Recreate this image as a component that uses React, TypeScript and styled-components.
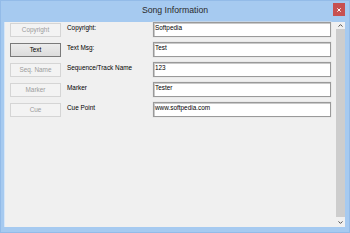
import React from "react";
import styled, { createGlobalStyle } from "styled-components";

const GlobalStyle = createGlobalStyle`
  html, body { margin: 0; padding: 0; background: #ffffff; }
  body { font-family: "Liberation Sans", Arial, sans-serif; }
  * { box-sizing: border-box; }
`;

const Window = styled.div`
  width: 350px;
  height: 233px;
  background: #a6caf0;
  box-shadow: inset 0 0 0 1px #93bbe8;
  display: flex;
  flex-direction: column;
  padding: 0 5px 6px 5px;
`;

const TitleBar = styled.div`
  height: 22px;
  display: grid;
  grid-template-columns: 1fr auto 1fr;
  align-items: start;
`;

const Title = styled.div`
  grid-column: 2;
  font-size: 8.7px;
  line-height: 10px;
  margin-top: 5px;
  color: #2b2b2b;
  white-space: nowrap;
`;

const CloseButton = styled.div`
  grid-column: 3;
  justify-self: end;
  margin-top: 3px;
  width: 12px;
  height: 13px;
  background: #c75050;
  display: flex;
  align-items: center;
  justify-content: center;
`;

const Client = styled.div`
  flex: 1;
  display: flex;
  background: #f0f0f0;
  box-shadow: -1px 0 0 #d6e6f8;
`;

const Content = styled.div`
  flex: 1;
  padding-left: 5px;
  display: flex;
  flex-direction: column;
`;

const Row = styled.div`
  height: 20px;
  display: grid;
  grid-template-columns: 57px 86px 178px;
  align-items: start;
`;

const SideButton = styled.div<{ $enabled?: boolean }>`
  margin-top: 1px;
  width: 51px;
  height: 14px;
  border: 1px solid ${(p) => (p.$enabled ? "#7a7a7a" : "#d5d5d5")};
  background: ${(p) => (p.$enabled ? "linear-gradient(#ececec, #dcdcdc)" : "#f3f3f3")};
  color: ${(p) => (p.$enabled ? "#000000" : "#9c9c9c")};
  font-size: 6.4px;
  line-height: 12px;
  text-align: center;
  white-space: nowrap;
`;

const Label = styled.div`
  padding-top: 2px;
  font-size: 6.4px;
  line-height: 8px;
  color: #000000;
  white-space: nowrap;
`;

const TextBox = styled.div`
  height: 15px;
  border: 1px solid #9a9a9a;
  box-shadow: inset 1px 1px 0 #c9c9c9, 0 0 0 0.5px #e2e2e2;
  background: #ffffff;
  padding: 1px 0 0 1px;
  font-size: 6.4px;
  line-height: 8px;
  color: #000000;
  white-space: nowrap;
  overflow: hidden;
`;

const ScrollBar = styled.div`
  width: 9px;
  display: flex;
  flex-direction: column;
  background: #f0f0f0;
`;

const ScrollArrow = styled.div<{ $h: number }>`
  height: ${(p) => p.$h}px;
  display: flex;
  align-items: center;
  justify-content: center;
`;

const Thumb = styled.div`
  flex: 1;
  background: #cdcdcd;
`;

const Chevron = ({ up }: { up?: boolean }) => (
  <svg width="5" height="3" viewBox="0 0 5 3">
    <path
      d={up ? "M0.5 2.6 L2.5 0.6 L4.5 2.6" : "M0.5 0.4 L2.5 2.4 L4.5 0.4"}
      fill="none"
      stroke="#505050"
      strokeWidth="1"
    />
  </svg>
);

const fields = [
  { button: "Copyright", label: "Copyright:", value: "Softpedia", enabled: false },
  { button: "Text", label: "Text Msg:", value: "Test", enabled: true },
  { button: "Seq. Name", label: "Sequence/Track Name", value: "123", enabled: false },
  { button: "Marker", label: "Marker", value: "Tester", enabled: false },
  { button: "Cue", label: "Cue Point", value: "www.softpedia.com", enabled: false },
];

export default function App() {
  return (
    <>
      <GlobalStyle />
      <Window>
        <TitleBar>
          <Title>Song Information</Title>
          <CloseButton>
            <svg width="4" height="4" viewBox="0 0 4 4">
              <path d="M0.3 0.3 L3.7 3.7 M3.7 0.3 L0.3 3.7" stroke="#ffffff" strokeWidth="1" />
            </svg>
          </CloseButton>
        </TitleBar>
        <Client>
          <Content>
            {fields.map((f) => (
              <Row key={f.button}>
                <SideButton $enabled={f.enabled}>{f.button}</SideButton>
                <Label>{f.label}</Label>
                <TextBox>{f.value}</TextBox>
              </Row>
            ))}
          </Content>
          <ScrollBar>
            <ScrollArrow $h={7}>
              <Chevron up />
            </ScrollArrow>
            <Thumb />
            <ScrollArrow $h={10}>
              <Chevron />
            </ScrollArrow>
          </ScrollBar>
        </Client>
      </Window>
    </>
  );
}
